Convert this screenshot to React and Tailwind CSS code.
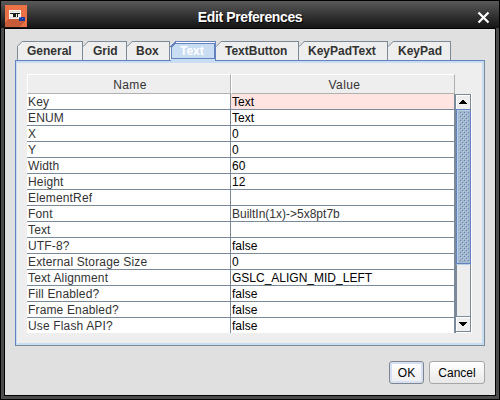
import React from "react";

const tabs = [
  { label: "General", width: "w-[66px]", pad: "pl-[9px]", first: true },
  { label: "Grid", width: "w-[44px]", pad: "pl-[10px]" },
  { label: "Box", width: "w-[43px]", pad: "pl-[9px]" },
  { label: "Text", width: "w-[46px]", pad: "pl-[10px]", selected: true },
  { label: "TextButton", width: "w-[83px]", pad: "pl-[9px]" },
  { label: "KeyPadText", width: "w-[89px]", pad: "pl-[9px]" },
  { label: "KeyPad", width: "w-[63px]", pad: "pl-[10px]" },
];

const rows = [
  ["Key", "Text"],
  ["ENUM", "Text"],
  ["X", "0"],
  ["Y", "0"],
  ["Width", "60"],
  ["Height", "12"],
  ["ElementRef", ""],
  ["Font", "BuiltIn(1x)->5x8pt7b"],
  ["Text", ""],
  ["UTF-8?", "false"],
  ["External Storage Size", "0"],
  ["Text Alignment", "GSLC_ALIGN_MID_LEFT"],
  ["Fill Enabled?", "false"],
  ["Frame Enabled?", "false"],
  ["Use Flash API?", "false"],
];

function AppIcon() {
  return (
    <svg width="22" height="22" viewBox="0 0 22 22" shapeRendering="crispEdges">
      <rect width="22" height="22" fill="#ec7147" />
      <path d="M4 13L0 17V22H14L20 16V14Z" fill="#c65c38" />
      <rect x="4" y="5" width="12" height="9" fill="#f7f4f0" />
      <path d="M5 6h10v1h-10zM5 12h8v1h-8z" fill="#ddd8d2" />
      <path d="M5 8h2v1h-2zM7 8h8v1h-8zM8 9h3v3h-3zM12 8h1v4h-1z" fill="#1b1b1b" />
      <rect x="14" y="12" width="6" height="4" fill="#173a9c" />
      <path d="M14 12h2v1h-2zM17 13h1v1h-1z" fill="#5a83df" />
    </svg>
  );
}

function Tab({ tab }) {
  if (tab.selected) {
    return (
      <div className={`relative h-[22px] shrink-0 ${tab.width} ${tab.pad} pt-px text-white`}>
        <svg className="absolute top-0 left-0" width="46" height="22" viewBox="0 0 46 22" shapeRendering="crispEdges">
          <path d="M0 7h1v12h-1z" fill="#f4f4f4" />
          <path d="M1 6.5L6.5 1H45V22H1z" fill="#c8ddf2" />
          <path d="M6 1h39v1H6z" fill="#fff" />
          <path d="M5 0h41v1H5z" fill="#6382bf" />
          <path d="M1.5 17.5V6.5L5.5 2.5H44.5V17.5Z" stroke="#6382bf" fill="none" />
          <path d="M.5 6L6 .5" stroke="#6382bf" fill="none" />
          <path d="M45 0h1v19h-1z" fill="#6382bf" />
        </svg>
        <span className="relative block leading-[18px]">{tab.label}</span>
      </div>
    );
  }
  return (
    <div
      className={`relative h-[19px] shrink-0 ${tab.width} ${tab.pad} border-t border-r border-[#7a8a99] bg-[#eee] text-[#333] ${tab.first ? "border-l" : ""}`}
    >
      <svg className={`absolute -top-px ${tab.first ? "-left-px" : "left-0"}`} width="6" height="6" viewBox="0 0 6 6">
        <path d="M0 0H6L0 6Z" fill="#e0e0e0" />
        <path d="M0 5.7L5.7 0" stroke="#7a8a99" />
      </svg>
      <span className="block leading-[18px]">{tab.label}</span>
    </div>
  );
}

function ScrollBar() {
  return (
    <div className="flex h-[239px] w-4 shrink-0 flex-col border-r border-white bg-[#eee]">
      <div className="flex h-[15px] items-center justify-center border-t border-r border-[#7a8a99] shadow-[inset_1px_1px_0_#fff]">
        <svg width="8" height="4" viewBox="0 0 8 4" shapeRendering="crispEdges">
          <path d="M3 0h2v1h1v1h1v1h1v1H0V3h1V2h1V1h1z" fill="#000" />
        </svg>
      </div>
      <div className="h-[155px] border border-[#6382bf] bg-[#b8cfe5] p-px">
        <svg width="12" height="152" className="block" shapeRendering="crispEdges">
          <defs>
            <pattern id="bumps" x="1" width="4" height="4" patternUnits="userSpaceOnUse">
              <rect width="4" height="4" fill="#a3b8cc" />
              <path d="M1 1h1v1h-1zM3 3h1v1h-1z" fill="#6382bf" />
              <path d="M0 0h1v1h-1zM2 2h1v1h-1z" fill="#b8cfe5" />
            </pattern>
          </defs>
          <rect width="12" height="152" fill="#a3b8cc" />
          <rect x="1" y="1" width="10" height="149" fill="url(#bumps)" />
        </svg>
      </div>
      <div className="h-[52px] border-t border-r border-l border-t-[#b8cfe5] border-r-[#7a8a99] border-l-[#7a8a99] bg-[#eee]" />
      <div className="flex h-4 items-center justify-center border-t border-r border-b border-[#7a8a99] shadow-[inset_1px_1px_0_#fff]">
        <svg width="8" height="4" viewBox="0 0 8 4" shapeRendering="crispEdges">
          <path d="M0 0h8v1H7v1H6v1H5v1H3V3H2V2H1V1H0z" fill="#000" />
        </svg>
      </div>
      <div className="h-px bg-white" />
    </div>
  );
}

export default function App() {
  return (
    <div className="flex h-[400px] w-[500px] flex-col overflow-hidden border border-black bg-[#4c4c4c] font-['Liberation_Sans',Arial,sans-serif] text-[12px] text-[#333]">
      <header className="flex h-[27px] shrink-0 items-start bg-linear-to-b from-[#5a5a5a] to-[#151515]">
        <div className="w-[94px] pt-[4px] pl-[4px]">
          <AppIcon />
        </div>
        <h1 className="flex-1 pt-[6px] text-center text-[14px] leading-[20px] font-bold tracking-[-0.38px] text-white [text-shadow:1px_1px_1px_#000]">
          Edit Preferences
        </h1>
        <div className="flex w-[94px] justify-end pt-[10px] pr-[9px]">
          <svg width="13" height="13" viewBox="0 0 13 13">
            <path d="M1.5 1.5L11.5 11.5M11.5 1.5L1.5 11.5" stroke="#fff" strokeWidth="2.2" />
          </svg>
        </div>
      </header>

      <main className="mx-[3px] mb-[3px] flex min-h-0 flex-1 flex-col border border-black bg-[#e0e0e0] pt-[12px] pl-[10px]">
        <div className="ml-[2px] flex h-[19px] text-[12px] font-bold">
          {tabs.map((tab) => (
            <Tab key={tab.label} tab={tab} />
          ))}
        </div>

        <section className="h-[286px] w-[470px] shrink-0 border border-t-[#6382bf] border-r-[#7a8a99] border-b-[#7a8a99] border-l-[#6382bf] bg-[#eee]">
          <div className="h-full border-t-2 border-r-2 border-b-2 border-l border-[#c8ddf2] pt-[11px] pl-[10px]">
            <div className="flex h-5 w-[428px] text-center leading-[20px]">
              <div className="w-[204px] border-t border-r border-b border-l border-t-white border-r-[#b0b0b0] border-b-[#b0b0b0] border-l-white pl-[2px] tracking-[0.4px]">
                Name
              </div>
              <div className="flex-1 border border-t-white border-r-[#b0b0b0] border-b-[#b0b0b0] border-l-white pl-[3px] tracking-[0.4px]">
                Value
              </div>
            </div>
            <div className="flex h-[239px]">
              <div className="h-[239px] w-[429px] shrink-0 overflow-hidden border-r-2 border-[#7a8a99] bg-white">
                {rows.map(([name, value], i) => (
                  <div key={name} className="flex h-4 border-b border-[#7a8a99] leading-[16px] whitespace-nowrap">
                    <div className="w-[204px] border-r border-[#7a8a99] pl-px tracking-[0.15px]">{name}</div>
                    <div className={`flex-1 pl-px ${i === 0 ? "bg-[#ffe4e1]" : ""} ${name === "Font" ? "" : "text-black"}`}>
                      {value}
                    </div>
                  </div>
                ))}
              </div>
              <ScrollBar />
            </div>
          </div>
        </section>

        <footer className="mt-[15px] flex w-[470px] shrink-0 justify-end gap-[5px] text-black">
          <button className="h-[23px] w-[35px] rounded-[3px] border border-[#7f858d] bg-linear-to-b from-white to-[#eeeeee] text-[12px] leading-[22px] shadow-[inset_0_0_0_2px_#d5e0f5]">
            OK
          </button>
          <button className="h-[23px] w-[56px] rounded-[3px] border border-[#a6a6a6] bg-linear-to-b from-white to-[#e8e8e8] text-[12px] leading-[22px]">
            Cancel
          </button>
        </footer>
      </main>
    </div>
  );
}
